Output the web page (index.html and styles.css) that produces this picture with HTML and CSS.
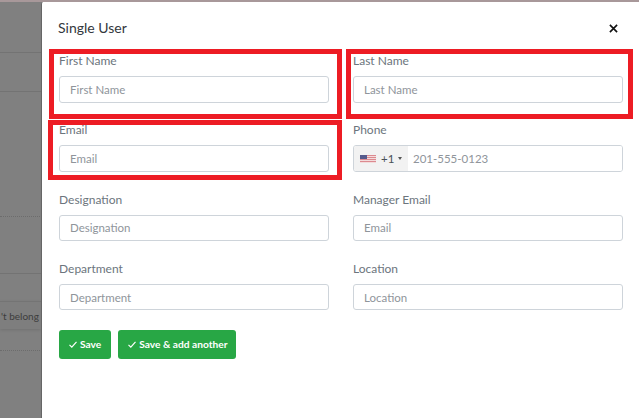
FILE: index.html
```html
<!DOCTYPE html>
<html lang="en">
<head>
<meta charset="utf-8">
<title>Single User</title>
<link rel="stylesheet" href="styles.css">
</head>
<body>
<div class="backdrop">
  <div class="rule rule-a"></div>
  <div class="rule rule-b"></div>
  <div class="rule rule-c dotted"></div>
  <div class="rule rule-d"></div>
  <div class="tip">'t belong</div>
  <div class="rule rule-e dotted"></div>
</div>
<main class="modal">
  <header class="modal-head">
    <h1>Single User</h1>
    <svg class="close" viewBox="0 0 10 10" aria-label="Close"><path d="M1 1l8 8M9 1l-8 8"/></svg>
  </header>
  <form class="grid">
    <div class="field"><label>First Name</label><input placeholder="First Name"></div>
    <div class="field"><label>Last Name</label><input placeholder="Last Name"></div>
    <div class="field"><label>Email</label><input placeholder="Email"></div>
    <div class="field"><label>Phone</label>
      <div class="phone">
        <div class="dial">
          <svg class="flag" viewBox="0 0 16 8"><rect width="16" height="8" fill="#dc8a90"/><path d="M0 1.5h16M0 3.5h16M0 5.5h16M0 7.5h16" stroke="#f3dcdc" stroke-width="1"/><rect width="7" height="4" fill="#555a8c"/></svg>
          <span>+1</span><i class="caret"></i>
        </div>
        <input placeholder="201-555-0123">
      </div>
    </div>
    <div class="field"><label>Designation</label><input placeholder="Designation"></div>
    <div class="field"><label>Manager Email</label><input placeholder="Email"></div>
    <div class="field"><label>Department</label><input placeholder="Department"></div>
    <div class="field"><label>Location</label><input placeholder="Location"></div>
  </form>
  <div class="actions">
    <button type="button"><svg class="check" viewBox="0 0 8 7"><path d="M.5 3.8l2.3 2.3L7.5.8"/></svg>Save</button>
    <button type="button"><svg class="check" viewBox="0 0 8 7"><path d="M.5 3.8l2.3 2.3L7.5.8"/></svg>Save &amp; add another</button>
  </div>
  <div class="mark mark-first"></div>
  <div class="mark mark-last"></div>
  <div class="mark mark-email"></div>
</main>
</body>
</html>
```
FILE: styles.css
```css
* { box-sizing: border-box; }
html, body { margin: 0; height: 100%; overflow: hidden; }
body {
  width: 639px; height: 418px; position: relative; background: #808080;
  font-family: "Lato", "Noto Sans", sans-serif; color: #6c757d;
}
.backdrop { position: absolute; inset: 0; border-top: 2px solid #a8989a; }
.rule { position: absolute; left: 0; width: 42px; height: 1px; background: #737373; }
.rule-a { top: 50px; }
.rule-b { top: 89px; }
.rule-c { top: 214px; }
.rule-d { top: 271px; }
.rule-e { top: 348px; }
.dotted { background: none; border-top: 1px dotted #6c6c6c; }
.tip {
  position: absolute; left: 0; top: 299px; width: 41px; height: 28px; overflow: hidden;
  background: #7e7e7e; font-size: 10px; line-height: 29px; color: #3d3d3d; white-space: nowrap;
  border-top: 1px solid #747474; padding-left: 1px; box-shadow: 0 1px 3px rgba(0, 0, 0, .12);
}
.modal {
  position: absolute; left: 41px; top: 2px; width: 598px; height: 416px;
  background: #fff; border-left: 1px solid #666; border-top-left-radius: 2px;
  padding: 0 16px 0 17px;
}
.modal-head { display: flex; align-items: center; justify-content: space-between; height: 50px; }
h1 { margin: 0 0 0 -1px; font-size: 14px; font-weight: 400; color: #33383d; }
.close { width: 9px; height: 9px; margin-right: 5px; margin-top: 2px; }
.close path { stroke: #111; stroke-width: 1.8; fill: none; }
.grid { display: grid; grid-template-columns: 270px 270px; column-gap: 24px; row-gap: 18.83px; }
.field { display: flex; flex-direction: column; gap: 8px; padding-top: 2px; }
label { font-size: 12px; line-height: 14px; color: #6c757d; }
input {
  width: 100%; height: 26.5px; padding: 0 10px; font: 11.5px "Lato", "Noto Sans", sans-serif;
  border: 1px solid #ced4da; border-radius: 3px; background: #fff; outline: 0; color: #495057;
}
input::placeholder { color: #8f959b; opacity: 1; }
.phone { display: flex; height: 26.5px; border: 1px solid #ced4da; border-radius: 3px; overflow: hidden; }
.phone input { border: 0; height: 24.5px; padding: 0 5px; flex: 1; border-radius: 0; }
.dial { width: 54px; background: #f2f2f2; display: flex; align-items: center; padding-left: 6px; color: #495057; font-size: 11.5px; }
.flag { width: 16px; height: 8px; margin-right: 5px; }
.caret { width: 0; height: 0; border: 2px solid transparent; border-top: 3px solid #555; border-bottom: 0; margin-left: 4px; }
.actions { display: flex; gap: 7px; margin-top: 19.5px; }
button {
  display: flex; align-items: center; height: 29px; border: 0; border-radius: 3px; background: #28a745; color: #fff;
  font: 700 10.2px "Lato", "Noto Sans", sans-serif; padding: 0 9px 0 10px;
}
button:first-child { padding-right: 10px; }
.check { width: 8px; height: 7px; margin-right: 3px; }
.check path { fill: none; stroke: #fff; stroke-width: 1.2; }
.mark { position: absolute; border: 5px solid #ed1c24; }
.mark-first { left: 7px; top: 47px; width: 293px; height: 70px; }
.mark-last { left: 304px; top: 47px; width: 287px; height: 70px; }
.mark-email { left: 6px; top: 118px; width: 294px; height: 60px; }
```
